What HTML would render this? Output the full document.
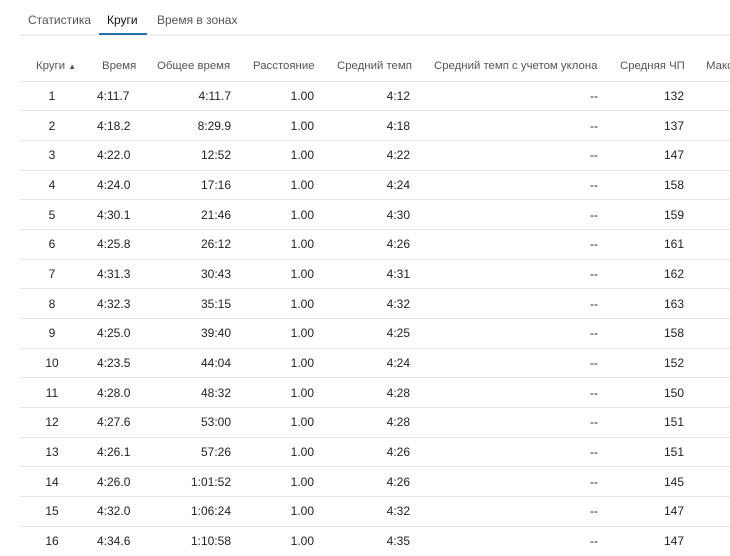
<!DOCTYPE html>
<html><head><meta charset="utf-8"><style>
body{margin:0;width:730px;height:556px;overflow:hidden;background:#fff;font-family:"Liberation Sans","DejaVu Sans",sans-serif;font-size:12px;color:#222;position:relative}
.a{position:absolute;white-space:nowrap;line-height:14px}
.h{color:#555;font-size:11.4px}
.r{text-align:right}
.line{position:absolute;left:20px;right:0;height:1px;background:#e6e6e6}
</style></head><body>
<div class="a" style="left:28px;top:13px;color:#555">Статистика</div>
<div class="a" style="left:107px;top:13px;color:#111">Круги</div>
<div class="a" style="left:157px;top:13px;color:#555">Время в зонах</div>
<div class="line" style="top:34px;height:2px;background:#eee"></div>
<div style="position:absolute;left:99px;top:33px;width:48px;height:2px;background:#2a6fa8"></div>
<div class="a h" style="left:36px;top:59px">Круги <span style="font-size:8px">▲</span></div>
<div class="a h" style="left:102px;top:59px">Время</div>
<div class="a h" style="left:157px;top:59px">Общее время</div>
<div class="a h" style="left:253px;top:59px">Расстояние</div>
<div class="a h" style="left:337px;top:59px">Средний темп</div>
<div class="a h" style="left:434px;top:59px">Средний темп с учетом уклона</div>
<div class="a h" style="left:620px;top:59px">Средняя ЧП</div>
<div class="a h" style="left:706px;top:59px">Макс</div>
<div id="rows"></div>
<script>
var d=[["1","4:11.7","4:11.7","4:12","132"],["2","4:18.2","8:29.9","4:18","137"],["3","4:22.0","12:52","4:22","147"],["4","4:24.0","17:16","4:24","158"],["5","4:30.1","21:46","4:30","159"],["6","4:25.8","26:12","4:26","161"],["7","4:31.3","30:43","4:31","162"],["8","4:32.3","35:15","4:32","163"],["9","4:25.0","39:40","4:25","158"],["10","4:23.5","44:04","4:24","152"],["11","4:28.0","48:32","4:28","150"],["12","4:27.6","53:00","4:28","151"],["13","4:26.1","57:26","4:26","151"],["14","4:26.0","1:01:52","4:26","145"],["15","4:32.0","1:06:24","4:32","147"],["16","4:34.6","1:10:58","4:35","147"]];
var h="";
d.forEach(function(r,i){var y=96+i*29.67;var t=y-7;
h+='<div class="line" style="top:'+(y-15.5)+'px"></div>';
h+='<div class="a" style="left:32px;width:40px;text-align:center;top:'+t+'px">'+r[0]+'</div>';
h+='<div class="a" style="left:97px;top:'+t+'px">'+r[1]+'</div>';
h+='<div class="a r" style="left:131px;width:100px;top:'+t+'px">'+r[2]+'</div>';
h+='<div class="a r" style="left:214px;width:100px;top:'+t+'px">1.00</div>';
h+='<div class="a r" style="left:310px;width:100px;top:'+t+'px">'+r[3]+'</div>';
h+='<div class="a r" style="left:498px;width:100px;top:'+t+'px">--</div>';
h+='<div class="a r" style="left:584px;width:100px;top:'+t+'px">'+r[4]+'</div>';
});
document.getElementById("rows").innerHTML=h;
</script>
</body></html>
